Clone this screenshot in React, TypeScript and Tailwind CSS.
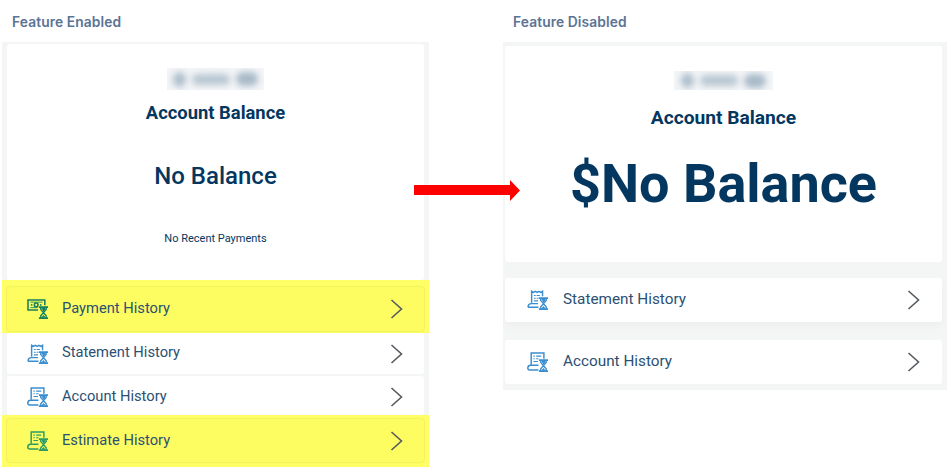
const navy = "text-[#04375f]";

function Hourglass({ c }: { c: string }) {
  return (
    <g fill="none" stroke={c} strokeWidth="1.5">
      <path d="M13 9h10M13 21h10" strokeWidth="1.900" />
      <path d="M15 9v2.500l3 3.500-3 3.500V21M21 9v2.500L18 15l3 3.500V21" />
      <path d="M15.500 20.500l2.500-3 2.500 3zM15.800 10h4.400v1.500L18 14z" fill={c} stroke="none" />
    </g>
  );
}

function IconMoney({ c }: { c: string }) {
  return (
    <svg width="22" height="20" viewBox="0 0 24 22" className="shrink-0">
      <g fill="none" stroke={c} strokeWidth="1.700">
        <path d="M12 12H1V1h18.500v6" />
        <path d="M3.500 3.500h13.500M3.500 9.500h8" strokeWidth="0.900" />
        <circle cx="10" cy="6.500" r="2" />
      </g>
      <circle cx="5" cy="6.500" r="1" fill={c} />
      <circle cx="15" cy="6.500" r="1" fill={c} />
      <Hourglass c={c} />
    </svg>
  );
}

function IconStatement({ c }: { c: string }) {
  return (
    <svg width="22" height="20" viewBox="0 0 24 22" className="shrink-0">
      <g fill="none" stroke={c} strokeWidth="1.600">
        <path d="M5 14V1.500l2 1.200 2-1.200 2 1.200 2-1.200 2 1.200 2-1.200V7" />
        <path d="M7.500 6h2M10.500 6h3.500M7.500 9h2M10.500 9h2M7.500 12h4.500" strokeWidth="1.200" />
        <path d="M1 19c0-2.500 1.500-4 4-4h7M1 19h11.500" />
      </g>
      <Hourglass c={c} />
    </svg>
  );
}

function IconAccount({ c }: { c: string }) {
  return (
    <svg width="22" height="20" viewBox="0 0 24 22" className="shrink-0">
      <g fill="none" stroke={c} strokeWidth="1.600">
        <path d="M4.500 14V1h14v6.500" />
        <path d="M7 4.500h1.500M10 4.500h5.500M7 7.500h1.500M10 7.500h2.500M7 10.500h5" strokeWidth="1.200" />
        <path d="M.8 17.500c0-2 1.200-3 3.200-3h8.500M.8 17.500c0 1.500 1 2.200 2.200 2.200h9.500" />
      </g>
      <Hourglass c={c} />
    </svg>
  );
}

function Chevron() {
  return (
    <svg width="14" height="22" viewBox="0 0 14 22" className="shrink-0">
      <path d="M1.500 2l10 9-10 9" fill="none" stroke="#555b60" strokeWidth="1.600" />
    </svg>
  );
}

function Row({ icon, label, className, text }: { icon: React.ReactNode; label: string; className: string; text: string }) {
  return (
    <div className={`flex items-center rounded-[3px] ${className}`}>
      <div className="w-[24px] flex justify-center">{icon}</div>
      <span className={`flex-1 leading-none text-[#2b5073] ${text}`}>{label}</span>
      <Chevron />
    </div>
  );
}

function Blurred({ className }: { className: string }) {
  return (
    <div className={`overflow-hidden flex items-center justify-center gap-[6px] ${className}`}>
      <div className="h-[15px] w-[13px] rounded-full bg-[#aebfcc] blur-[3px]" />
      <div className="h-[11px] w-[38px] rounded-full bg-[#b9c7d2] blur-[3px]" />
      <div className="h-[14px] w-[22px] rounded-full bg-[#a9bac8] blur-[3px]" />
    </div>
  );
}

const leftText = "ml-[12px] text-[14.7px] -translate-y-[1px]";
const rightText = "ml-[13px] text-[15.3px]";

export default function App() {
  return (
    <div className="relative w-[951px] h-[472px] overflow-hidden bg-white font-['Roboto',sans-serif]">
      <div className="flex">
        <section className="ml-[2px] w-[427px]">
          <h2 className="h-[42px] pt-[14px] pl-[10px] text-[13.8px] leading-[16px] font-semibold tracking-[0.1px] text-[#5b7395] font-['Inter',sans-serif]">
            Feature Enabled
          </h2>
          <div className="bg-[#f4f5f5] h-[425px] pt-[2px]">
            <div className="mx-[5px] h-[236px] rounded-[3px] bg-white flex flex-col items-center pt-[24px]">
              <Blurred className="w-[97px] h-[22px] bg-[#f3f5f7]" />
              <div className={`mt-[13px] text-[18.4px] leading-[20px] font-bold ${navy}`}>Account Balance</div>
              <div className={`mt-[39px] text-[24px] leading-[28px] font-medium ${navy}`}>No Balance</div>
              <div className={`mt-[42px] text-[11px] leading-[14px] ${navy}`}>No Recent Payments</div>
            </div>
            <div className="bg-[#ffff66] h-[53px] pt-[7px] px-[5px]">
              <Row
                icon={<IconMoney c="#16805f" />}
                label="Payment History"
                text={leftText}
                className="h-[44px] pl-[19px] pr-[20px] bg-[#fdfd62] shadow-[0_0_2px_rgba(120,120,40,0.35)]"
              />
            </div>
            <div className="px-[5px]">
              <Row
                icon={<IconStatement c="#3a8ed0" />}
                label="Statement History"
                text={leftText}
                className="h-[41px] pl-[19px] pr-[20px] bg-white"
              />
              <Row
                icon={<IconAccount c="#3a8ed0" />}
                label="Account History"
                text={leftText}
                className="mt-[2px] h-[39px] pt-[3px] pl-[19px] pr-[20px] bg-white"
              />
            </div>
            <div className="bg-[#ffff66] h-[52px] pt-[4px] px-[5px]">
              <Row
                icon={<IconAccount c="#2f9a62" />}
                label="Estimate History"
                text="ml-[12px] text-[14.7px]"
                className="h-[43px] pl-[19px] pr-[20px] bg-[#fdfd62] shadow-[0_0_2px_rgba(120,120,40,0.35)]"
              />
            </div>
          </div>
        </section>

        <section className="ml-[74px] w-[444px]">
          <h2 className="h-[42px] pt-[14px] pl-[10px] text-[13.8px] leading-[16px] font-semibold tracking-[0.1px] text-[#5b7395] font-['Inter',sans-serif]">
            Feature Disabled
          </h2>
          <div className="bg-[#f4f5f5] h-[348px] pt-[4px] pl-[2px] pr-[5px]">
            <div className="h-[216px] rounded-[3px] bg-white flex flex-col items-center pt-[25px]">
              <Blurred className="w-[99px] h-[19px] bg-[#f3f5f7] -ml-[1px]" />
              <div className={`mt-[18px] text-[19.2px] leading-[20px] font-bold ${navy}`}>Account Balance</div>
              <div className={`mt-[20px] text-[54px] leading-[72px] font-bold ${navy}`}>$No Balance</div>
            </div>
            <Row
              icon={<IconStatement c="#3a8ed0" />}
              label="Statement History"
              text={rightText}
              className="mt-[16px] h-[44px] pl-[21px] pr-[21px] bg-white shadow-[0_4px_8px_rgba(0,0,0,0.03)]"
            />
            <Row
              icon={<IconAccount c="#3a8ed0" />}
              label="Account History"
              text={rightText}
              className="mt-[18px] h-[44px] pl-[21px] pr-[21px] bg-white"
            />
          </div>
        </section>
      </div>

      <svg width="108" height="24" viewBox="0 0 108 24" className="absolute left-[413px] top-[179px]">
        <path d="M1 6h96V1l10 10.500-10 10.500v-6H1z" fill="#ff0000" />
      </svg>
    </div>
  );
}
